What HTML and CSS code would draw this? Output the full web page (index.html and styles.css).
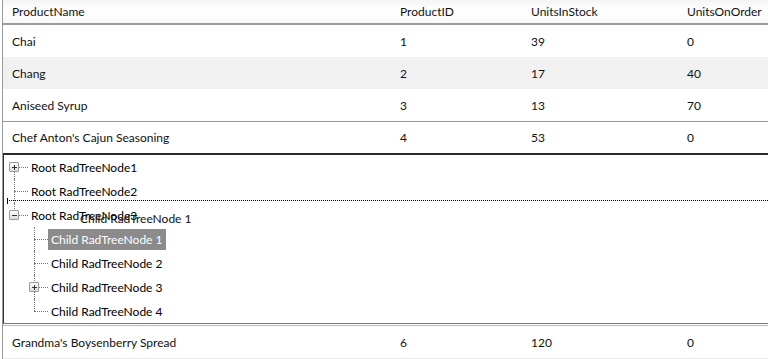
FILE: index.html
```html
<!DOCTYPE html>
<html lang="en">
<head>
  <meta charset="UTF-8">
  <title>Products grid with tree row</title>
  <link rel="stylesheet" href="styles.css">
</head>
<body>
  <div class="grid">
    <div class="grid-row grid-header">
      <div class="cell">ProductName</div>
      <div class="cell">ProductID</div>
      <div class="cell">UnitsInStock</div>
      <div class="cell">UnitsOnOrder</div>
    </div>
    <div class="grid-row">
      <div class="cell">Chai</div>
      <div class="cell">1</div>
      <div class="cell">39</div>
      <div class="cell">0</div>
    </div>
    <div class="grid-row alt">
      <div class="cell">Chang</div>
      <div class="cell">2</div>
      <div class="cell">17</div>
      <div class="cell">40</div>
    </div>
    <div class="grid-row">
      <div class="cell">Aniseed Syrup</div>
      <div class="cell">3</div>
      <div class="cell">13</div>
      <div class="cell">70</div>
    </div>
    <div class="grid-row ruled">
      <div class="cell">Chef Anton's Cajun Seasoning</div>
      <div class="cell">4</div>
      <div class="cell">53</div>
      <div class="cell">0</div>
    </div>

    <!-- detail row holding the tree, mid-drag -->
    <div class="tree-box">
      <ul class="tree">
        <li class="node first">
          <div class="node-line">
            <span class="slot"><span class="expander plus"></span></span>
            <span class="node-text">Root RadTreeNode1</span>
          </div>
        </li>
        <li class="node">
          <div class="node-line">
            <span class="slot"></span>
            <span class="node-text">Root RadTreeNode2</span>
          </div>
        </li>
        <li class="node last">
          <div class="node-line">
            <span class="slot"><span class="expander minus"></span></span>
            <span class="node-text">Root RadTreeNode3</span>
          </div>
          <ul class="tree children">
            <li class="node">
              <div class="node-line">
                <span class="slot"></span>
                <span class="node-text selected">Child RadTreeNode 1</span>
              </div>
            </li>
            <li class="node">
              <div class="node-line">
                <span class="slot"></span>
                <span class="node-text">Child RadTreeNode 2</span>
              </div>
            </li>
            <li class="node">
              <div class="node-line">
                <span class="slot"><span class="expander plus"></span></span>
                <span class="node-text">Child RadTreeNode 3</span>
              </div>
            </li>
            <li class="node last">
              <div class="node-line">
                <span class="slot"></span>
                <span class="node-text">Child RadTreeNode 4</span>
              </div>
            </li>
          </ul>
        </li>
      </ul>
      <div class="drop-line"></div>
      <div class="drag-cue">Child RadTreeNode 1</div>
    </div>

    <div class="grid-row after-tree">
      <div class="cell">Grandma's Boysenberry Spread</div>
      <div class="cell">6</div>
      <div class="cell">120</div>
      <div class="cell">0</div>
    </div>
  </div>
</body>
</html>
```

FILE: styles.css
```css
body {
  margin: 0;
  padding: 0;
  background: #fff;
  color: #111;
  font-family: Lato, "Open Sans", sans-serif;
  font-size: 12px;
  overflow: hidden;
}
.grid {
  margin-left: 2px;
  border-left: 1px solid #9a9a9a;
}
.grid-row {
  display: grid;
  grid-template-columns: 388px 131px 156px 1fr;
  height: 32px;
  align-items: center;
}
.cell {
  padding-left: 9px;
  white-space: nowrap;
}
.grid-header {
  height: 23px;
  background: linear-gradient(#f4f4f4, #fff 45%, #f8f8f8);
  border-bottom: 2px solid #9c9c9c;
}
.grid-row.alt {
  background: #f1f1f1;
}
.grid-row.ruled {
  height: 31px;
  border-top: 1px solid #9a9a9a;
}
.grid-row.after-tree {
  height: 32px;
  margin-top: 1px;
  border-top: 1px solid #b8b8b8;
  border-bottom: 1px solid #ececec;
}

/* tree */
.tree-box {
  position: relative;
  border-top: 2px solid #2b2b2b;
  border-left: 1px solid #333;
  border-bottom: 1px solid #7a7a7a;
}
.tree {
  list-style: none;
  margin: 0;
  padding: 0;
}
.tree.children {
  padding-left: 20px;
}
.node {
  position: relative;
}
.node-line {
  display: flex;
  align-items: center;
  height: 24px;
  position: relative;
}
.slot {
  width: 20px;
  height: 24px;
  flex: none;
  display: flex;
  align-items: center;
  justify-content: center;
  position: relative;
  margin-right: 4px;
}
/* horizontal connector */
.slot::before {
  content: "";
  position: absolute;
  left: 10px;
  right: -4px;
  top: 12px;
  border-top: 1px dotted #777;
}
/* vertical connector through the level */
.node::before {
  content: "";
  position: absolute;
  left: 10px;
  top: 0;
  bottom: 0;
  border-left: 1px dotted #777;
}
.node.first::before {
  top: 12px;
}
.node.last::before {
  height: 12px;
  bottom: auto;
}
.expander {
  width: 8px;
  height: 8px;
  border: 1px solid #9a9a9a;
  border-radius: 1px;
  background: linear-gradient(#fff, #dcdcdc);
  position: relative;
  z-index: 1;
}
.expander::before,
.expander.plus::after {
  content: "";
  position: absolute;
  background: #333;
}
.expander::before {
  left: 2px;
  top: 4px;
  width: 5px;
  height: 1px;
}
.expander.plus::after {
  left: 4px;
  top: 2px;
  width: 1px;
  height: 5px;
}
.node-text {
  padding: 0 4px 0 3px;
  height: 21px;
  line-height: 21px;
  white-space: nowrap;
  color: #000;
}
.node-text.selected {
  background: #8b8b8b;
  color: #fff;
}
.drop-line {
  position: absolute;
  left: 3px;
  right: 0;
  top: 45px;
  border-top: 1px dotted #000;
}
.drop-line::before {
  content: "";
  position: absolute;
  left: 0;
  top: -3px;
  height: 6px;
  border-left: 1px solid #000;
}
.drag-cue {
  position: absolute;
  left: 76px;
  top: 56px;
  color: #111;
  white-space: nowrap;
}
```
